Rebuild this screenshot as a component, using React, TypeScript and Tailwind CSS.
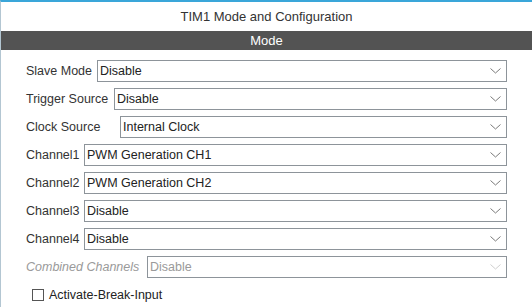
const rows = [
  { label: "Slave Mode", w: "w-[71px]", value: "Disable" },
  { label: "Trigger Source", w: "w-[88px]", value: "Disable" },
  { label: "Clock Source", w: "w-[94px]", value: "Internal Clock" },
  { label: "Channel1", w: "w-[58px]", value: "PWM Generation CH1" },
  { label: "Channel2", w: "w-[58px]", value: "PWM Generation CH2" },
  { label: "Channel3", w: "w-[58px]", value: "Disable" },
  { label: "Channel4", w: "w-[58px]", value: "Disable" },
];

const Chevron = ({ disabled }: { disabled?: boolean }) => (
  <svg width="11" height="6" viewBox="0 0 11 6" className="shrink-0">
    <path
      d="M0.5 0.5 L5.5 5 L10.5 0.5"
      fill="none"
      stroke={disabled ? "#cfcfcf" : "#7a7a7a"}
      strokeWidth="1"
    />
  </svg>
);

const Select = ({ value, disabled }: { value: string; disabled?: boolean }) => (
  <div className="flex-1 h-[22px] border border-[#8d949a] bg-white flex items-center pl-[2px] pr-[5px]">
    <span className={disabled ? "flex-1 text-[#9a9a9a]" : "flex-1 text-[#222]"}>{value}</span>
    <Chevron disabled={disabled} />
  </div>
);

export default function App() {
  return (
    <div
      className="w-[532px] h-[307px] bg-white border-t-2 border-t-[#3aa6d9] border-l border-l-[#b3c6d2] overflow-hidden text-[12.5px] text-[#333]"
      style={{ fontFamily: '"Liberation Sans", Arial, sans-serif' }}
    >
      <div className="h-[29px] flex items-center justify-center text-[13px] text-[#333]">
        TIM1 Mode and Configuration
      </div>
      <div className="h-[19px] bg-[#535353] text-white text-[13px] flex items-center justify-center">
        Mode
      </div>

      <div className="pt-[10px] pl-[25px] pr-[25px] flex flex-col gap-[6px]">
        {rows.map((r) => (
          <div key={r.label} className="flex items-center h-[22px]">
            <span className={`${r.w} shrink-0 whitespace-nowrap`}>{r.label}</span>
            <Select value={r.value} />
          </div>
        ))}
        <div className="flex items-center h-[22px]">
          <span className="w-[121px] shrink-0 whitespace-nowrap italic text-[#9a9a9a]">
            Combined Channels
          </span>
          <Select value="Disable" disabled />
        </div>
        <div className="flex items-center h-[22px] pl-[6px]">
          <span className="w-[12px] h-[12px] border border-[#555] bg-white shrink-0" />
          <span className="ml-[5px] text-[#222]">Activate-Break-Input</span>
        </div>
      </div>
    </div>
  );
}
